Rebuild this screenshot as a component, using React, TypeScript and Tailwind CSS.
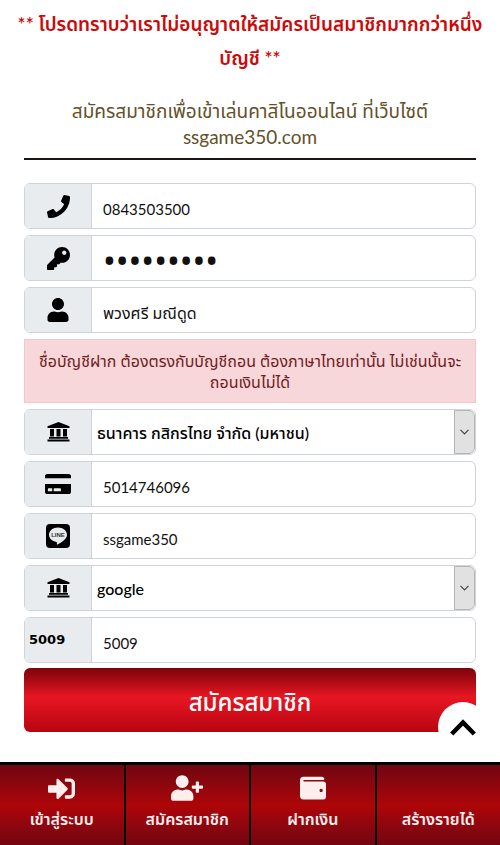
import type { ReactNode } from 'react';
import {
  FaCreditCard,
  FaKey,
  FaPhone,
  FaSignInAlt,
  FaUser,
  FaUserPlus,
  FaWallet,
} from 'react-icons/fa';

interface FieldRowProps {
  id: string;
  icon: ReactNode;
  label: string;
  children: ReactNode;
}

const FieldRow = ({ id, icon, label, children }: FieldRowProps) => (
  <div className="flex h-[46px] overflow-hidden rounded-md border border-[#ced4da] bg-white">
    <label
      htmlFor={id}
      aria-label={label}
      className="flex w-[67px] shrink-0 items-center justify-center border-r border-[#ced4da] bg-[#e9ecef] text-black"
    >
      {icon}
    </label>
    {children}
  </div>
);

interface TextFieldProps {
  id: string;
  icon: ReactNode;
  label: string;
  value: string;
  type?: string;
  textClass?: string;
}

const TextField = ({
  id,
  icon,
  label,
  value,
  type = 'text',
  textClass = 'text-[15px] pt-1.5',
}: TextFieldProps) => (
  <FieldRow id={id} icon={icon} label={label}>
    <input
      id={id}
      type={type}
      defaultValue={value}
      className={`min-w-0 flex-1 px-[11px] text-[#111] outline-none ${textClass}`}
    />
  </FieldRow>
);

const BankIcon = () => (
  <svg width="23" height="20" viewBox="0 0 23 20" fill="currentColor">
    <path d="M11.5 0 22.500 4.200V6H.5V4.200z" />
    <path d="M3 7h4v7.500H3zM9.500 7h4v7.500h-4zM16 7h4v7.500h-4z" />
    <path d="M2 15h19v1.800H2zM.5 17.500h22v2H.5z" />
  </svg>
);

interface SelectFieldProps {
  id: string;
  label: string;
  option: string;
}

const SelectField = ({ id, label, option }: SelectFieldProps) => (
  <FieldRow id={id} icon={<BankIcon />} label={label}>
    <div className="relative flex min-w-0 flex-1">
      <select
        id={id}
        className="min-w-0 flex-1 appearance-none bg-white pt-0.5 pr-6 pl-[5px] text-base font-medium text-black outline-none"
      >
        <option>{option}</option>
      </select>
      <span className="pointer-events-none absolute inset-y-0 right-0 flex w-[21px] items-center justify-center rounded-r-md border border-[#b5b5b5] bg-[#e1e1e1]">
        <svg width="9" height="6" viewBox="0 0 9 6" fill="none" stroke="#444" strokeWidth="1.2">
          <path d="M0.5 0.8 4.5 4.8 8.5 0.8" />
        </svg>
      </span>
    </div>
  </FieldRow>
);

const LineIcon = () => (
  <svg width="24" height="24" viewBox="0 0 24 24">
    <rect width="24" height="24" rx="4" fill="#000" />
    <path
      d="M12 3.500c-5 0-9 3.200-9 7.300 0 3.600 3.200 6.500 7.400 7.100.8.2.6 1 .4 2.100 0 .5.3.7.9.4 2.600-1.300 9.300-5 9.300-9.600C21 6.700 17 3.500 12 3.500z"
      fill="#e9ecef"
    />
    <text
      x="12"
      y="13"
      textAnchor="middle"
      fontSize="6"
      fontWeight="bold"
      fill="#333"
      fontFamily="Liberation Sans, sans-serif"
    >
      LINE
    </text>
  </svg>
);

const navItems = [
  { label: 'เข้าสู่ระบบ', icon: <FaSignInAlt size={27} /> },
  { label: 'สมัครสมาชิก', icon: <FaUserPlus size={32} /> },
  { label: 'ฝากเงิน', icon: <FaWallet size={26} /> },
  { label: 'สร้างรายได้', icon: null },
];

const App = () => {
  return (
    <div className="bg-white font-[Lato,'Noto_Sans_Thai','Noto_Sans',sans-serif]">
      <main className="relative px-6 pt-[7px] pb-[30px]">
        <p className="-mx-4 text-center text-[19px] leading-[34px] font-semibold text-[#cc0a0a]">
          ** โปรดทราบว่าเราไม่อนุญาตให้สมัครเป็นสมาชิกมากกว่าหนึ่ง
          <br />
          บัญชี **
        </p>
        <h1 className="mt-[23px] border-b-2 border-[#1c1410] pb-[8px] text-center text-[19px] leading-[26px] text-[#64512a]">
          สมัครสมาชิกเพื่อเข้าเล่นคาสิโนออนไลน์ ที่เว็บไซต์
          <br />
          ssgame350.com
        </h1>

        <form className="mt-[23px]" onSubmit={(e) => e.preventDefault()}>
          <div className="flex flex-col gap-[6px]">
            <TextField id="phone" label="เบอร์โทรศัพท์" icon={<FaPhone size={23} />} value="0843503500" />
            <TextField
              id="password"
              label="รหัสผ่าน"
              type="password"
              icon={<FaKey size={23} />}
              value="843503500"
              textClass="font-['Noto_Sans',sans-serif] text-[34px] pt-1"
            />
            <TextField
              id="name"
              label="ชื่อบัญชี"
              icon={<FaUser size={24} />}
              value="พวงศรี มณีดูด"
              textClass="text-base pt-1.5"
            />
            <p className="border border-[#f5c6cb] bg-[#f8d7da] py-[10px] text-center text-base leading-[21px] text-[#721c24]">
              ชื่อบัญชีฝาก ต้องตรงกับบัญชีถอน ต้องภาษาไทยเท่านั้น ไม่เช่นนั้นจะ
              <br />
              ถอนเงินไม่ได้
            </p>
            <SelectField id="bank" label="ธนาคาร" option="ธนาคาร กสิกรไทย จำกัด (มหาชน)" />
            <TextField id="account" label="เลขที่บัญชี" icon={<FaCreditCard size={26} />} value="5014746096" />
            <TextField id="line" label="LINE" icon={<LineIcon />} value="ssgame350" />
            <SelectField id="source" label="แหล่งที่มา" option="google" />
            <TextField
              id="captcha"
              label="5009"
              icon={
                <span className="w-full pl-1 font-['DejaVu_Sans',sans-serif] text-[13px] font-bold">
                  5009
                </span>
              }
              value="5009"
            />
          </div>
          <button
            type="submit"
            className="mt-[5px] h-[64px] w-full rounded-md bg-linear-to-b from-[#7c040b] via-[#e81622] via-45% to-[#b80510] pt-1 text-2xl font-medium text-white"
          >
            สมัครสมาชิก
          </button>
        </form>

        <button
          type="button"
          aria-label="กลับขึ้นด้านบน"
          className="absolute right-3 bottom-[10px] flex size-[50px] items-center justify-center rounded-full bg-white"
        >
          <svg width="26" height="17" viewBox="0 0 26 17" fill="none" stroke="#000" strokeWidth="4.500">
            <path d="M1.700 15 13 3.500 24.300 15" />
          </svg>
        </button>
      </main>

      <nav className="grid grid-cols-4 gap-0.5 border-t-[3px] border-black bg-black">
        {navItems.map((item) => (
          <a
            key={item.label}
            href="#"
            className="flex h-[81px] flex-col items-center bg-linear-to-b from-[#700610] via-[#ad0508] via-50% to-[#700610] text-[#ffeeee]"
          >
            <span className="mt-1 flex h-[38px] items-center">{item.icon}</span>
            <span className="text-base leading-6 font-semibold">{item.label}</span>
          </a>
        ))}
      </nav>
    </div>
  );
};

export default App;
